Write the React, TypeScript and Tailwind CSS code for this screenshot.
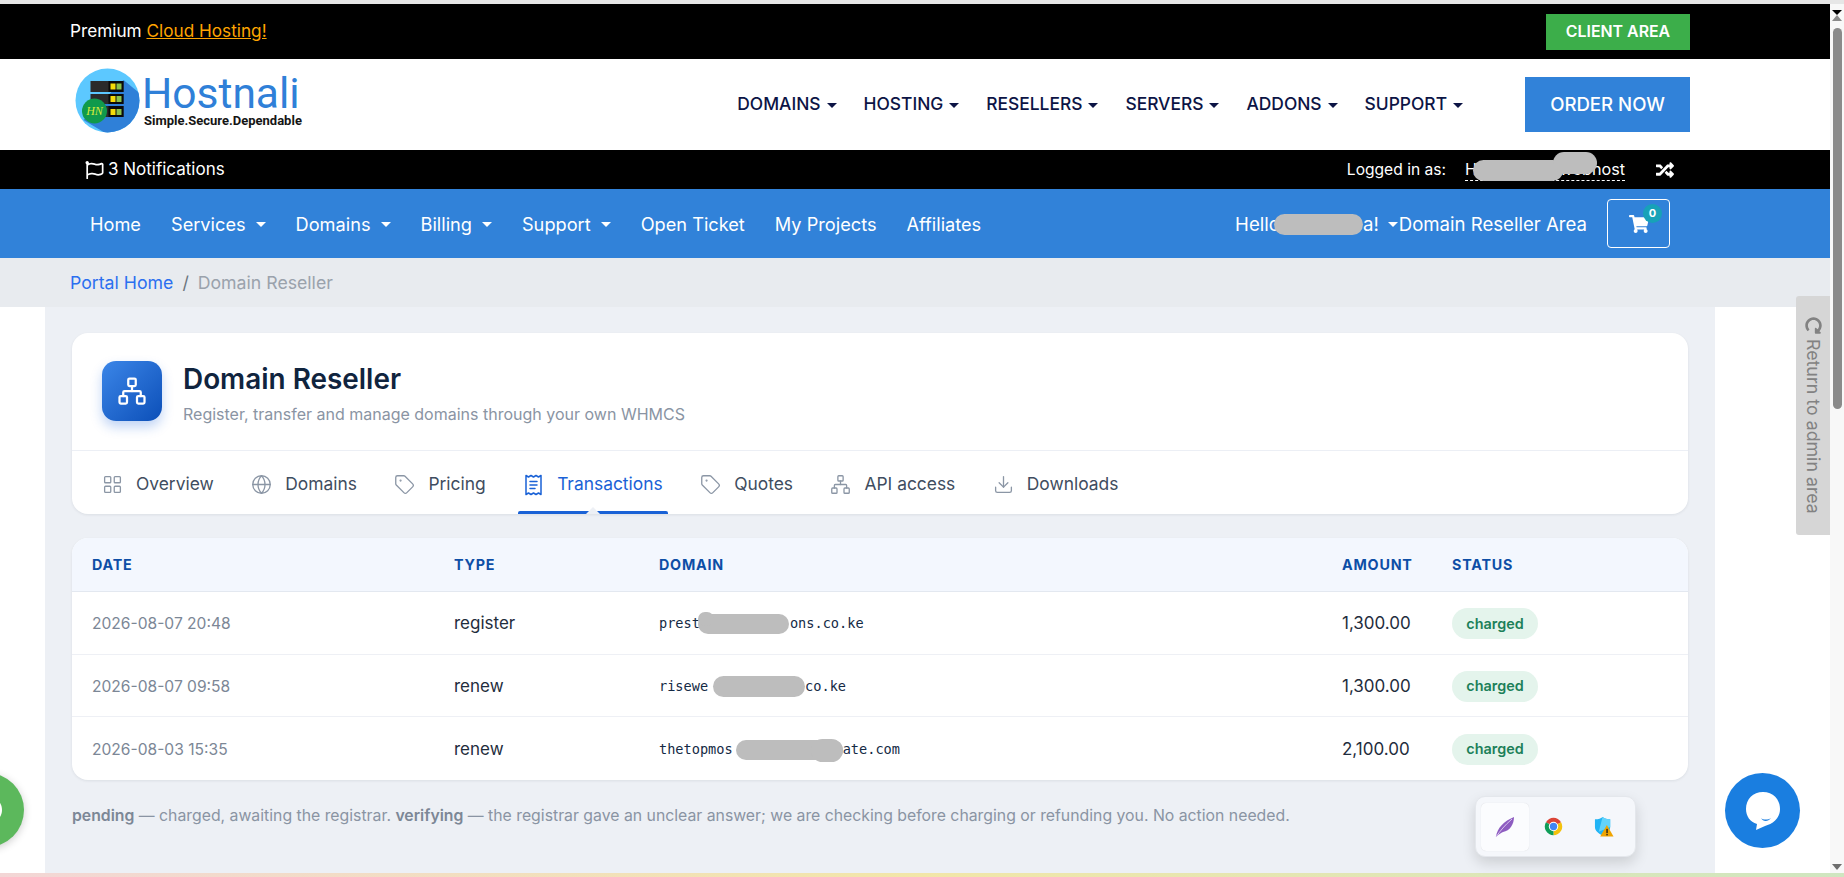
import { FaRegFlag, FaRandom, FaShoppingCart, FaRedoAlt, FaWhatsapp } from 'react-icons/fa';
import { LayoutGrid, Globe, Tag, Network, Download } from 'lucide-react';
import type { ReactNode } from 'react';

const font = "font-['Inter','Noto_Sans',sans-serif]";

function Caret({ className }: { className: string }) {
  return <span className={`inline-block border-x-[5px] border-t-[5px] border-x-transparent ${className}`} />;
}

function Blob({ className, children }: { className: string; children?: ReactNode }) {
  return <span className={`inline-block rounded-full bg-[#bdbdbd] ${className}`}>{children}</span>;
}

function ReceiptIcon() {
  return (
    <svg width="21" height="22" viewBox="0 0 21 22" fill="none" stroke="currentColor" strokeWidth="1.5" strokeLinejoin="round" strokeLinecap="round">
      <path d="M3 1.5 L5.5 3 L8 1.5 L10.5 3 L13 1.5 L15.5 3 L18 1.5 V20.5 L15.5 19 L13 20.5 L10.5 19 L8 20.5 L5.5 19 L3 20.5 Z" />
      <path d="M7 7.5 H14 M7 11 H14 M7 14.5 H12" />
    </svg>
  );
}

function Logo() {
  return (
    <div className="flex items-start">
      <svg width="65" height="65" viewBox="0 0 64 65" className="mt-[9px] shrink-0">
        <defs>
          <clipPath id="logo-clip">
            <circle cx="32" cy="32.5" r="32" />
          </clipPath>
        </defs>
        <circle cx="32" cy="32.5" r="32" fill="#5cc8ff" />
        <polygon clipPath="url(#logo-clip)" points="48,12 70,30 70,70 38,70 8,52" fill="#2f80d8" />
        <rect x="15" y="13" width="33" height="11" fill="#2b2b2b" />
        <rect x="15" y="26" width="33" height="10" fill="#2b2b2b" />
        <rect x="15" y="38" width="33" height="11" fill="#2b2b2b" />
        <rect x="33" y="13" width="15" height="11" fill="#0b0b0b" />
        <rect x="33" y="26" width="15" height="10" fill="#0b0b0b" />
        <rect x="33" y="38" width="15" height="11" fill="#0b0b0b" />
        <rect x="35" y="15.5" width="5" height="6" fill="#f5dc0a" />
        <rect x="41" y="15.5" width="5" height="6" fill="#8bc34a" />
        <rect x="35" y="28" width="5" height="6" fill="#f5dc0a" />
        <rect x="41" y="28" width="5" height="6" fill="#8bc34a" />
        <rect x="35" y="41" width="5" height="6" fill="#f5dc0a" />
        <rect x="41" y="41" width="5" height="6" fill="#8bc34a" />
        <circle cx="19" cy="43" r="12.5" fill="#109a4c" />
        <text x="19" y="47" textAnchor="middle" fontSize="12" fontStyle="italic" fontFamily="Liberation Serif" fill="#d7ea3a">
          HN
        </text>
      </svg>
      <div className="ml-[2px] flex flex-col">
        <span className="mt-[14px] text-[42.5px] leading-[41px] text-[#2f80d8] font-['Roboto',sans-serif] font-normal">Hostnali</span>
        <span className="ml-[2px] text-[13px] leading-[14px] font-bold text-[#151515] font-['Roboto',sans-serif]">Simple.Secure.Dependable</span>
      </div>
    </div>
  );
}

const siteMenu = ['DOMAINS', 'HOSTING', 'RESELLERS', 'SERVERS', 'ADDONS', 'SUPPORT'];

const clientMenu: { label: string; caret?: boolean }[] = [
  { label: 'Home' },
  { label: 'Services', caret: true },
  { label: 'Domains', caret: true },
  { label: 'Billing', caret: true },
  { label: 'Support', caret: true },
  { label: 'Open Ticket' },
  { label: 'My Projects' },
  { label: 'Affiliates' },
];

const tabs = [
  { label: 'Overview', icon: <LayoutGrid size={21} strokeWidth={1.5} /> },
  { label: 'Domains', icon: <Globe size={21} strokeWidth={1.5} /> },
  { label: 'Pricing', icon: <Tag size={21} strokeWidth={1.5} /> },
  { label: 'Transactions', icon: <ReceiptIcon />, active: true },
  { label: 'Quotes', icon: <Tag size={21} strokeWidth={1.5} /> },
  { label: 'API access', icon: <Network size={21} strokeWidth={1.5} /> },
  { label: 'Downloads', icon: <Download size={21} strokeWidth={1.5} /> },
];

const rows: { date: string; type: string; domain: ReactNode; amount: string }[] = [
  {
    date: '2026-08-07 20:48',
    type: 'register',
    domain: (
      <>
        prest
        <Blob className="relative ml-[-2px] mr-[1px] h-[20px] w-[91px] align-middle">
          <span className="absolute left-0 top-[-2px] h-[14px] w-[16px] rounded-full bg-[#bdbdbd]" />
        </Blob>
        ons.co.ke
      </>
    ),
    amount: '1,300.00',
  },
  {
    date: '2026-08-07 09:58',
    type: 'renew',
    domain: (
      <>
        risewe
        <Blob className="ml-[5px] h-[21px] w-[92px] align-middle" />
        co.ke
      </>
    ),
    amount: '1,300.00',
  },
  {
    date: '2026-08-03 15:35',
    type: 'renew',
    domain: (
      <>
        thetopmos
        <Blob className="relative ml-[3px] h-[20px] w-[107px] align-middle">
          <span className="absolute right-0 top-[-1px] h-[23px] w-[32px] rounded-full bg-[#bdbdbd]" />
        </Blob>
        ate.com
      </>
    ),
    amount: '2,100.00',
  },
];

function Tray() {
  return (
    <div className="absolute left-[1475px] top-[796px] flex h-[61px] w-[161px] items-center rounded-[10px] border border-[#e4e7ec] bg-[#f5f7fb] pl-[5px] shadow-[0_6px_14px_rgba(0,0,0,0.14)]">
      <div className="flex h-[48px] w-[48px] items-center justify-center rounded-[5px] bg-[#fbfcfe] shadow-[0_0_1px_rgba(0,0,0,0.15)]">
        <svg width="20" height="22" viewBox="0 0 20 22">
          <path d="M1 21 C2 12 9 5 19 1 C19 8 15 15 8 16 C6 17 4 18 2 20 Z" fill="#8d5cc0" />
          <path d="M1 21 C5 15 10 9 17 3" stroke="#d9c2ee" strokeWidth="1" fill="none" />
        </svg>
      </div>
      <div className="ml-[14px] flex h-[48px] w-[21px] items-center">
        <svg width="21" height="21" viewBox="0 0 24 24">
          <path d="M12 12 L3.34 7 A10 10 0 0 1 20.66 7 Z" fill="#db4437" />
          <path d="M12 12 L20.66 7 A10 10 0 0 1 12 22 Z" fill="#f4c20d" />
          <path d="M12 12 L12 22 A10 10 0 0 1 3.34 7 Z" fill="#0f9d58" />
          <circle cx="12" cy="12" r="5.4" fill="#fff" />
          <circle cx="12" cy="12" r="4.2" fill="#4285f4" />
        </svg>
      </div>
      <div className="ml-[30px] flex h-[48px] w-[20px] items-center">
        <svg width="21" height="21" viewBox="0 0 21 21">
          <path d="M1 3 C5 3 7 2 9 0.5 C11 2 14 3 17 3 L17 11 C17 15 13 18 9 20 C5 18 1 15 1 11 Z" fill="#21b4f5" />
          <path d="M9 0.5 C11 2 14 3 17 3 L17 11 L5 16 Z" fill="#63d3fb" />
          <path d="M13.5 9 L20.5 21 L6.5 21 Z" fill="#f0a400" />
          <rect x="13" y="13" width="1.4" height="4.5" fill="#1a1a1a" />
          <rect x="13" y="18.4" width="1.4" height="1.4" fill="#1a1a1a" />
        </svg>
      </div>
    </div>
  );
}

export default function App() {
  return (
    <div className={`relative flex h-[877px] w-[1844px] flex-col overflow-hidden bg-white ${font}`}>
      <div className="h-1 shrink-0 bg-[#e6e6e6]" />

      <div className="flex min-h-0 flex-1">
        <main className="flex w-[1830px] shrink-0 flex-col">
          {/* promo bar */}
          <div className="flex h-[55px] items-center justify-between bg-black pl-[70px] pr-[140px]">
            <p className="mt-[-1px] text-[17.2px] text-white">
              Premium <a className="text-[#ffa500] underline">Cloud Hosting!</a>
            </p>
            <a className="flex h-[36px] w-[144px] items-center justify-center bg-[#3cae4a] text-[15.9px] font-semibold text-white">CLIENT AREA</a>
          </div>

          {/* site header */}
          <header className="flex h-[91px] items-start bg-white pl-[75px] pr-[140px]">
            <Logo />
            <nav className="ml-auto flex h-[91px] items-center gap-[27px]">
              {siteMenu.map((item) => (
                <span key={item} className="flex items-center gap-[6px] text-[17.4px] font-medium text-[#0c1445]">
                  {item}
                  <Caret className="mt-[2px] border-t-[#0c1445]" />
                </span>
              ))}
            </nav>
            <a className="ml-[62px] mt-[18px] flex h-[55px] w-[165px] items-center justify-center bg-[#3182d9] text-[18.6px] font-medium text-white">ORDER NOW</a>
          </header>

          {/* notifications bar */}
          <div className="flex h-[39px] items-center bg-black pl-[85px] pr-[155px] text-white">
            <FaRegFlag className="h-[18px] w-[19px]" />
            <span className="ml-[4px] text-[17px]">3 Notifications</span>
            <span className="ml-auto text-[15.6px]">Logged in as:</span>
            <span className="relative ml-[19px] flex w-[160px] justify-between border-b border-dashed border-white text-[16.2px] leading-[22px]">
              <span>H</span>
              <span>webhost</span>
              <Blob className="absolute left-[8px] top-[2px] h-[21px] w-[90px]" />
              <Blob className="absolute left-[88px] top-[-6px] h-[22px] w-[44px]" />
            </span>
            <FaRandom className="ml-[30px] h-[18px] w-[20px]" />
          </div>

          {/* client nav */}
          <nav className="flex h-[69px] items-center bg-[#3182d9] pl-[90px] pr-[160px] text-white">
            <div className="flex items-center gap-[30px] pt-[2px] text-[18.2px]">
              {clientMenu.map((item) => (
                <span key={item.label} className="flex items-center gap-[10px]">
                  {item.label}
                  {item.caret && <Caret className="mt-[1px] border-t-white" />}
                </span>
              ))}
            </div>
            <div className="ml-auto flex items-center">
              <div className="flex items-center pt-[2px] text-[18.6px]">
                <span>Hello</span>
                <Blob className="ml-[-6px] h-[21px] w-[89px]" />
                <span>a!</span>
                <Caret className="ml-[9px] mr-[1px] border-t-white" />
                <span>Domain Reseller Area</span>
              </div>
              <div className="relative ml-[20px] flex h-[49px] w-[63px] items-center justify-center rounded-[4px] border border-white">
                <FaShoppingCart className="h-[18px] w-[20px]" />
                <span className="absolute left-[35px] top-[4px] flex h-[19px] w-[19px] items-center justify-center rounded-full bg-[#17a2b8] text-[11px] font-bold">0</span>
              </div>
            </div>
          </nav>

          {/* breadcrumb */}
          <div className="flex h-[49px] items-center bg-[#e8ebef] pl-[70px] pt-[2px] text-[17.7px]">
            <a className="text-[#2b6ff0]">Portal Home</a>
            <span className="mx-[9px] text-[#6c757d]">/</span>
            <span className="text-[#9aa2ac]">Domain Reseller</span>
          </div>

          <div className="ml-[45px] w-[1670px] flex-1 bg-[#edf0f5] px-[27px] pt-[26px]">
            {/* page head card */}
            <section className="h-[181px] rounded-[16px] bg-white shadow-[0_1px_3px_rgba(16,24,40,0.08)]">
              <div className="flex h-[118px] items-start border-b border-[#eceff5] pl-[30px] pt-[28px]">
                <div className="flex h-[60px] w-[60px] items-center justify-center rounded-[14px] bg-gradient-to-br from-[#3b86e8] to-[#0b4fb8] text-white shadow-[0_6px_12px_rgba(30,100,220,0.28)]">
                  <Network size={30} strokeWidth={1.8} />
                </div>
                <div className="ml-[21px] mt-[1px]">
                  <h1 className="text-[27.9px] font-semibold leading-[34px] text-[#10243e]">Domain Reseller</h1>
                  <p className="mt-[8px] text-[16px] leading-[20px] text-[#8a94a3]">Register, transfer and manage domains through your own WHMCS</p>
                </div>
              </div>
              <div className="flex h-[63px] pl-[30px]">
                {tabs.map((tab) => (
                  <div
                    key={tab.label}
                    className={`relative mr-[37.5px] flex items-center gap-[13px] pt-[4px] text-[17.4px] ${tab.active ? 'text-[#1a62d6]' : 'text-[#3f4d60]'}`}
                  >
                    <span className={tab.active ? 'text-[#1a62d6]' : 'text-[#8b96a5]'}>{tab.icon}</span>
                    {tab.label}
                    {tab.active && (
                      <>
                        <span className="absolute inset-x-[-5px] bottom-0 h-[3px] rounded-t-[2px] bg-[#1a62d6]" />
                        <span className="absolute bottom-0 left-1/2 ml-[-7px] h-0 w-0 border-x-[7px] border-b-[7px] border-x-transparent border-b-[#edf0f5]" />
                      </>
                    )}
                  </div>
                ))}
              </div>
            </section>

            {/* transactions table */}
            <section className="mt-[24px] overflow-hidden rounded-[16px] bg-white shadow-[0_1px_3px_rgba(16,24,40,0.08)]">
              <div className="grid h-[54px] grid-cols-[362px_205px_683px_110px_1fr] items-center border-b border-[#e3e8f0] bg-[#f3f7fe] pl-[20px] text-[14.3px] font-bold tracking-[0.8px] text-[#0d4ea6]">
                <span>DATE</span>
                <span>TYPE</span>
                <span>DOMAIN</span>
                <span>AMOUNT</span>
                <span>STATUS</span>
              </div>
              {rows.map((row) => (
                <div key={row.date} className="grid h-[62.5px] grid-cols-[362px_205px_683px_110px_1fr] items-center border-b border-[#eef0f5] pl-[20px] pt-[2px] last:border-b-0">
                  <span className="text-[15.6px] text-[#7c8796]">{row.date}</span>
                  <span className="text-[17px] text-[#1f2d3d]">{row.type}</span>
                  <span className="font-['DejaVu_Sans_Mono',monospace] text-[13.6px] text-[#142a45]">{row.domain}</span>
                  <span className="text-[17px] text-[#1f2d3d]">{row.amount}</span>
                  <span className="flex h-[31px] w-[86px] items-center justify-center rounded-full bg-[#e4f4ec] text-[14.4px] font-semibold text-[#1c8059]">charged</span>
                </div>
              ))}
            </section>

            <p className="mt-[24px] text-[15.8px] leading-[24px] text-[#8a94a3]">
              <b className="font-semibold text-[#7c8796]">pending</b> — charged, awaiting the registrar. <b className="font-semibold text-[#7c8796]">verifying</b> — the registrar gave an unclear answer; we are checking before charging or refunding you. No action needed.
            </p>
          </div>
        </main>

        {/* browser scrollbar */}
        <div className="flex w-[14px] flex-col items-center bg-[#f8f8f8] pt-[6px]">
          <Caret className="border-t-0 border-b-[6px] border-b-[#8a8a8a]" />
          <div className="mt-[7px] h-[381px] w-[9px] rounded-[5px] bg-[#8a8a8a]" />
          <Caret className="mt-auto mb-[3px] border-t-[6px] border-t-[#6e6e6e]" />
        </div>
      </div>

      <div className="h-1 shrink-0 bg-gradient-to-r from-[#f3d6d6] via-[#f2e6a8] to-[#cfe6c0]" />

      {/* return to admin */}
      <div className="absolute left-[1796px] top-[296px] flex h-[239px] w-[34px] flex-col items-center rounded-l-[3px] bg-[#d6d6d6] pt-[21px] text-[#828282]">
        <FaRedoAlt className="h-[17px] w-[17px] rotate-90" />
        <span className="mt-[5px] text-[17.8px] [writing-mode:vertical-rl]">Return to admin area</span>
      </div>

      {/* whatsapp */}
      <div className="absolute left-[-50px] top-[773px] flex h-[74px] w-[74px] items-center justify-end rounded-full bg-[#5cb85c] pr-[2px] text-white shadow-[0_2px_8px_rgba(0,0,0,0.2)]">
        <FaWhatsapp className="mr-[18px] h-[32px] w-[32px]" />
      </div>

      {/* live chat */}
      <div className="absolute left-[1725px] top-[773px] flex h-[75px] w-[75px] items-center justify-center rounded-full bg-[#1a7ee0]">
        <svg width="36" height="40" viewBox="0 0 36 40">
          <path d="M18 1 C28 1 35 8 35 18 C35 28 27 33 20 35 L11 39 L12 33 C5 31 1 25 1 18 C1 8 8 1 18 1 Z" fill="#fff" />
          <path d="M16 27 C18 29 23 29 26 27 C23 31 18 31 16 27 Z" fill="#1a7ee0" />
        </svg>
      </div>

      <Tray />
    </div>
  );
}
